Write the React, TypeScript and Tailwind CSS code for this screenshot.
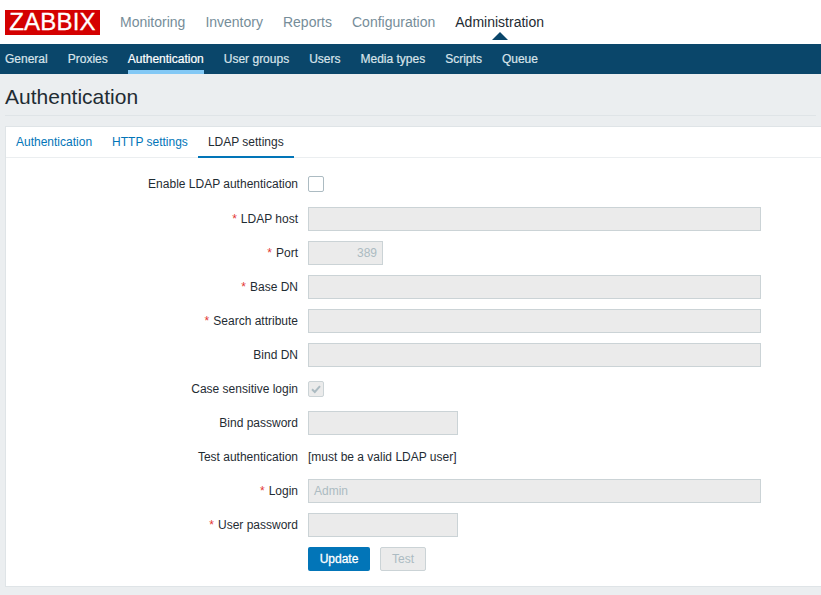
const topMenu = ["Monitoring", "Inventory", "Reports", "Configuration", "Administration"];
const subMenu = ["General", "Proxies", "Authentication", "User groups", "Users", "Media types", "Scripts", "Queue"];
const tabs = ["Authentication", "HTTP settings", "LDAP settings"];

const Row = (props: { label: string; required?: boolean; children: any }) => {
  return (
    <div className="flex h-6 items-center">
      <label className="w-[292px] text-right text-[12px] text-[#1f2c33]">
        {props.required && <span className="mr-1 text-[#e33734]">*</span>}
        {props.label}
      </label>
      <div className="ml-[10px] flex items-center">{props.children}</div>
    </div>
  );
};

const Field = (props: { width: string; value?: string; right?: boolean }) => {
  return (
    <div
      className={`h-6 ${props.width} border border-[#cbd3d6] bg-[#ebebeb] px-[5px] text-[12px] leading-[22px] text-[#acbbc2] ${
        props.right ? "text-right" : ""
      }`}
    >
      {props.value}
    </div>
  );
};

export default function App() {
  return (
    <div className="h-[595px] w-full overflow-hidden bg-[#ebeef0] font-['Liberation_Sans',Arial,sans-serif]">
      <header className="flex h-11 items-center bg-white pl-[5px]">
        <div className="flex h-[25px] w-[95px] items-center justify-center bg-[#d40000] text-[24px] leading-none tracking-[0.2px] text-white [-webkit-text-stroke:0.3px_white]">
          ZABBIX
        </div>
        <nav className="ml-[20px] flex gap-5 text-[14px]">
          {topMenu.map((item) => (
            <span key={item} className={item === "Administration" ? "relative text-[#1f2c33]" : "text-[#768d99]"}>
              {item}
              {item === "Administration" && (
                <span className="absolute left-[37px] top-[20px] h-0 w-0 border-x-[8px] border-b-[8px] border-x-transparent border-b-[#0a466a]" />
              )}
            </span>
          ))}
        </nav>
      </header>

      <nav className="flex h-[30px] gap-5 bg-[#0a466a] pl-[5px] text-[12px] [-webkit-text-stroke:0.2px]">
        {subMenu.map((item) => (
          <span
            key={item}
            className={
              item === "Authentication"
                ? "h-[30px] border-b-4 border-[#82c8f5] leading-[30px] text-white"
                : "h-[30px] leading-[30px] text-[#d9e4ea]"
            }
          >
            {item}
          </span>
        ))}
      </nav>

      <div className="mx-[5px] h-[42px] border-b border-[#dfe4e7] text-[21px] leading-[46px] text-[#1f2c33]">
        Authentication
      </div>

      <main className="ml-[5px] mt-[10px] h-[461px] border border-r-0 border-[#dfe4e7] bg-white">
        <div className="flex h-[31px] border-b border-[#ebeef0] text-[12px]">
          {tabs.map((tab) => (
            <span
              key={tab}
              className={
                tab === "LDAP settings"
                  ? "h-[31px] border-b-2 border-[#0275b8] px-[10px] leading-[30px] text-[#1f2c33]"
                  : "h-[31px] px-[10px] leading-[30px] text-[#0275b8]"
              }
            >
              {tab}
            </span>
          ))}
        </div>

        <form className="mt-[14px] flex flex-col gap-[10px]">
          <div className="mb-px">
            <Row label="Enable LDAP authentication">
              <span className="h-4 w-4 rounded-[2px] border border-[#acbbc2] bg-white" />
            </Row>
          </div>
          <Row label="LDAP host" required>
            <Field width="w-[453px]" />
          </Row>
          <Row label="Port" required>
            <Field width="w-[75px]" value="389" right />
          </Row>
          <Row label="Base DN" required>
            <Field width="w-[453px]" />
          </Row>
          <Row label="Search attribute" required>
            <Field width="w-[453px]" />
          </Row>
          <Row label="Bind DN">
            <Field width="w-[453px]" />
          </Row>
          <Row label="Case sensitive login">
            <span className="flex h-4 w-4 items-center justify-center rounded-[2px] border border-[#cbd3d6] bg-[#ebebeb]">
              <svg width="12" height="12" viewBox="0 0 12 12" fill="none">
                <path d="M2 6.2 L4.8 9 L10 3.2" stroke="#acbbc2" strokeWidth="2" />
              </svg>
            </span>
          </Row>
          <Row label="Bind password">
            <Field width="w-[150px]" />
          </Row>
          <Row label="Test authentication">
            <span className="text-[12px] text-[#1f2c33]">[must be a valid LDAP user]</span>
          </Row>
          <Row label="Login" required>
            <Field width="w-[453px]" value="Admin" />
          </Row>
          <Row label="User password" required>
            <Field width="w-[150px]" />
          </Row>
          <div className="ml-[302px] flex gap-[10px] text-[12px]">
            <button type="button" className="h-6 w-[62px] rounded-[2px] bg-[#0275b8] text-white [-webkit-text-stroke:0.3px_white]">
              Update
            </button>
            <button
              type="button"
              className="h-6 w-[46px] rounded-[2px] border border-[#cbd3d6] bg-[#ebebeb] text-[#acbbc2]"
            >
              Test
            </button>
          </div>
        </form>
      </main>
    </div>
  );
}
